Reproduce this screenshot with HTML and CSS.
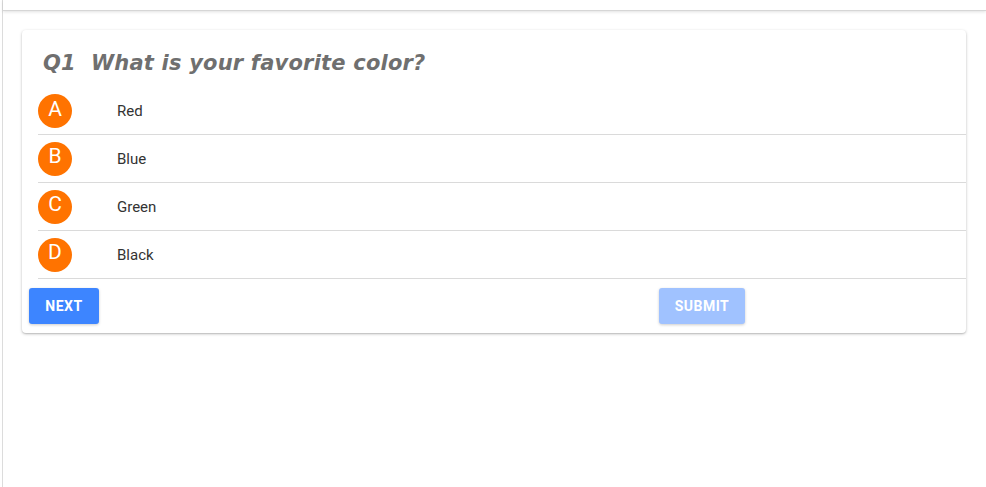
FILE: index.html
```html
<!DOCTYPE html>
<html>
<head>
<meta charset="utf-8">
<link rel="stylesheet" href="styles.css">
</head>
<body>
<div class="app">
  <div class="topbar"></div>
  <main class="content">
    <section class="card">
      <h1 class="question">Q1&nbsp; What is your favorite color?</h1>
      <ul class="options">
        <li class="option"><span class="badge">A</span><span class="label">Red</span></li>
        <li class="option"><span class="badge">B</span><span class="label">Blue</span></li>
        <li class="option"><span class="badge">C</span><span class="label">Green</span></li>
        <li class="option"><span class="badge">D</span><span class="label">Black</span></li>
      </ul>
      <div class="actions">
        <button class="btn btn-next">NEXT</button>
        <button class="btn btn-submit" disabled>SUBMIT</button>
      </div>
    </section>
  </main>
</div>
</body>
</html>
```
FILE: styles.css
```css
* { box-sizing: border-box; }
html, body { margin: 0; padding: 0; background: #fff; }
body { font-family: Roboto, "Noto Sans", sans-serif; }
.app {
  margin-left: 2px;
  border-left: 1px solid #dcdcdc;
  min-height: 487px;
}
.topbar {
  height: 11px;
  border-bottom: 1px solid #d6d6d6;
  box-shadow: 0 1px 3px rgba(0,0,0,0.12);
}
.content {
  padding: 19px 19px 0 19px;
}
.card {
  width: 944px;
  background: #fff;
  border-radius: 4px;
  box-shadow: 0 1px 3px rgba(0,0,0,0.25), 0 1px 1px rgba(0,0,0,0.08);
  padding: 0 0 9px 0;
}
.question {
  margin: 0;
  padding: 19px 0 0 21px;
  height: 58px;
  font-family: "Comic Sans MS", "DejaVu Sans", sans-serif;
  font-style: italic;
  font-weight: bold;
  font-size: 21px;
  line-height: 28px;
  color: #6f6f6f;
  letter-spacing: 0.2px;
}
.options {
  list-style: none;
  margin: 0 0 0 16px;
  padding: 0;
}
.option {
  display: flex;
  align-items: center;
  height: 48px;
  border-bottom: 1px solid #dadada;
}
.option:first-child { height: 47px; }
.badge {
  width: 34px;
  height: 34px;
  border-radius: 50%;
  background: #ff7300;
  color: #fff;
  display: flex;
  align-items: center;
  justify-content: center;
  font-size: 21px;
  line-height: 1;
  padding-bottom: 4px;
}
.label {
  margin-left: 45px;
  font-size: 15px;
  color: #333;
}
.actions {
  display: flex;
  padding: 9px 0 0 7px;
}
.btn {
  height: 36px;
  border: none;
  border-radius: 3px;
  font-family: Roboto, sans-serif;
  font-weight: bold;
  font-size: 14px;
  letter-spacing: 0.5px;
  color: #fff;
  box-shadow: 0 1px 3px rgba(0,0,0,0.2);
  padding: 0;
}
.btn-next {
  width: 70px;
  background: #3d85ff;
}
.btn-submit {
  width: 86px;
  margin-left: 560px;
  background: #a0c2ff;
}
```
